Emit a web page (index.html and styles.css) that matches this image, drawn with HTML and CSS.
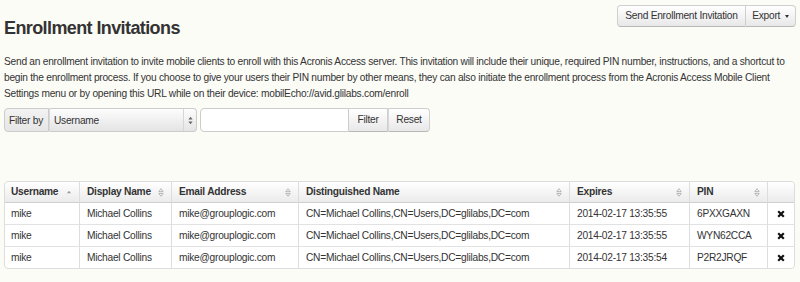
FILE: index.html
```html
<!DOCTYPE html>
<html>
<head>
<meta charset="utf-8">
<link rel="stylesheet" href="styles.css">
</head>
<body>
<div class="page">
  <div class="header">
    <h1 class="title">Enrollment Invitations</h1>
    <div class="btn-group">
      <button class="btn btn-send">Send Enrollment Invitation</button><button class="btn btn-export">Export <span class="caret"></span></button>
    </div>
  </div>
  <p class="intro">Send an enrollment invitation to invite mobile clients to enroll with this Acronis Access server. This invitation will include their unique, required PIN number, instructions, and a shortcut to begin the enrollment process. If you choose to give your users their PIN number by other means, they can also initiate the enrollment process from the Acronis Access Mobile Client Settings menu or by opening this URL while on their device: mobilEcho://avid.glilabs.com/enroll</p>
  <div class="filter">
    <div class="group">
      <span class="addon">Filter by</span>
      <div class="select"><span class="select-label">Username</span><span class="select-arrows"><svg width="5" height="9" viewBox="0 0 5 9"><path d="M2.5 0.8 L4.6 3.6 L0.4 3.6 Z M2.5 8.2 L4.6 5.4 L0.4 5.4 Z" fill="#666"/></svg></span></div>
    </div>
    <div class="group">
      <div class="text-input"></div>
      <button class="btn btn-join btn-filter">Filter</button><button class="btn btn-join btn-reset">Reset</button>
    </div>
  </div>
  <table class="grid">
    <colgroup>
      <col class="c-user"><col class="c-disp"><col class="c-mail"><col class="c-dn"><col class="c-exp"><col class="c-pin"><col class="c-del">
    </colgroup>
    <thead>
      <tr>
        <th><div class="th-in">Username<svg class="sort" width="6" height="9" viewBox="0 0 6 9"><path d="M3 2.8 L5 5.3 L1 5.3 Z" fill="#999"/></svg></div></th>
        <th><div class="th-in">Display Name<svg class="sort" width="6" height="9" viewBox="0 0 6 9"><path d="M3 0.7 L5.2 3.6 L0.8 3.6 Z M3 8.3 L5.2 5.4 L0.8 5.4 Z" fill="none" stroke="#aaa" stroke-width="0.8"/></svg></div></th>
        <th><div class="th-in">Email Address<svg class="sort" width="6" height="9" viewBox="0 0 6 9"><path d="M3 0.7 L5.2 3.6 L0.8 3.6 Z M3 8.3 L5.2 5.4 L0.8 5.4 Z" fill="none" stroke="#aaa" stroke-width="0.8"/></svg></div></th>
        <th><div class="th-in">Distinguished Name<svg class="sort" width="6" height="9" viewBox="0 0 6 9"><path d="M3 0.7 L5.2 3.6 L0.8 3.6 Z M3 8.3 L5.2 5.4 L0.8 5.4 Z" fill="none" stroke="#aaa" stroke-width="0.8"/></svg></div></th>
        <th><div class="th-in">Expires<svg class="sort" width="6" height="9" viewBox="0 0 6 9"><path d="M3 0.7 L5.2 3.6 L0.8 3.6 Z M3 8.3 L5.2 5.4 L0.8 5.4 Z" fill="none" stroke="#aaa" stroke-width="0.8"/></svg></div></th>
        <th><div class="th-in">PIN<svg class="sort" width="6" height="9" viewBox="0 0 6 9"><path d="M3 0.7 L5.2 3.6 L0.8 3.6 Z M3 8.3 L5.2 5.4 L0.8 5.4 Z" fill="none" stroke="#aaa" stroke-width="0.8"/></svg></div></th>
        <th></th>
      </tr>
    </thead>
    <tbody>
      <tr>
        <td>mike</td><td>Michael Collins</td><td>mike@grouplogic.com</td><td>CN=Michael Collins,CN=Users,DC=glilabs,DC=com</td><td>2014-02-17 13:35:55</td><td>6PXXGAXN</td>
        <td class="del"><svg width="8" height="8" viewBox="0 0 8 8"><path d="M1.2 1.2 L6.8 6.8 M6.8 1.2 L1.2 6.8" stroke="#111" stroke-width="2.2"/></svg></td>
      </tr>
      <tr>
        <td>mike</td><td>Michael Collins</td><td>mike@grouplogic.com</td><td>CN=Michael Collins,CN=Users,DC=glilabs,DC=com</td><td>2014-02-17 13:35:55</td><td>WYN62CCA</td>
        <td class="del"><svg width="8" height="8" viewBox="0 0 8 8"><path d="M1.2 1.2 L6.8 6.8 M6.8 1.2 L1.2 6.8" stroke="#111" stroke-width="2.2"/></svg></td>
      </tr>
      <tr>
        <td>mike</td><td>Michael Collins</td><td>mike@grouplogic.com</td><td>CN=Michael Collins,CN=Users,DC=glilabs,DC=com</td><td>2014-02-17 13:35:54</td><td>P2R2JRQF</td>
        <td class="del"><svg width="8" height="8" viewBox="0 0 8 8"><path d="M1.2 1.2 L6.8 6.8 M6.8 1.2 L1.2 6.8" stroke="#111" stroke-width="2.2"/></svg></td>
      </tr>
    </tbody>
  </table>
</div>
</body>
</html>
```
FILE: styles.css
```css
html, body {
  margin: 0;
  padding: 0;
  background: #fcfcf7;
}
body {
  font-family: "Liberation Sans", Arial, sans-serif;
  font-size: 10.2px;
  letter-spacing: -0.25px;
  color: #333;
}
.page {
  padding: 5px 4px 0 4px;
}
.header {
  display: flex;
  justify-content: space-between;
  align-items: flex-start;
}
.title {
  margin: 11px 0 0 0;
  font-size: 18px;
  line-height: 24px;
  letter-spacing: -0.6px;
  font-weight: bold;
  color: #333;
}
.btn-group {
  display: flex;
}
.btn {
  box-sizing: border-box;
  font-family: inherit;
  font-size: 10.2px;
  letter-spacing: -0.25px;
  color: #333;
  height: 22px;
  padding: 0;
  margin: 0;
  border: 1px solid #cfcfcf;
  border-bottom-color: #b8b8b8;
  background: linear-gradient(#ffffff, #e8e8e8);
  border-radius: 0;
  line-height: 20px;
  text-align: center;
}
.btn-send {
  width: 129px;
  border-radius: 4px 0 0 4px;
}
.btn-export {
  width: 50px;
  border-left: none;
  border-radius: 0 4px 4px 0;
}
.caret {
  display: inline-block;
  width: 0;
  height: 0;
  border-left: 2.5px solid transparent;
  border-right: 2.5px solid transparent;
  border-top: 3px solid #333;
  vertical-align: middle;
  margin-left: 2px;
}
.intro {
  margin: 14px 0 0 0;
  line-height: 16px;
}
.filter {
  display: flex;
  gap: 3px;
  margin-top: 6px;
}
.group {
  display: flex;
  height: 24px;
}
.addon {
  box-sizing: border-box;
  display: flex;
  align-items: center;
  white-space: nowrap;
  padding: 0 0 0 4px;
  width: 45px;
  border: 1px solid #ccc;
  border-radius: 4px 0 0 4px;
  background: linear-gradient(#f2f2f2, #e6e6e6);
}
.select {
  box-sizing: border-box;
  display: flex;
  align-items: center;
  width: 148px;
  border: 1px solid #ccc;
  border-left: 1px solid #d8d8d8;
  border-radius: 0 4px 4px 0;
  background: linear-gradient(#fdfdfd, #e4e4e4);
}
.select-label {
  flex: 1;
  padding-left: 4px;
}
.select-arrows {
  display: flex;
  align-items: center;
  justify-content: center;
  width: 12px;
  height: 100%;
  border-left: 1px solid #d6d6d6;
}
.text-input {
  box-sizing: border-box;
  width: 149px;
  border: 1px solid #ccc;
  border-radius: 4px 0 0 4px;
  background: #fff;
}
.btn-join {
  height: 24px;
  border-left: none;
  line-height: 22px;
}
.btn-filter {
  width: 39px;
}
.btn-reset {
  width: 42px;
  border-left: 1px solid #d6d6d6;
  border-radius: 0 4px 4px 0;
}
.grid {
  margin-top: 49px;
  width: 791px;
  table-layout: fixed;
  border-collapse: separate;
  border-spacing: 0;
  border: 1px solid #ddd;
  border-radius: 4px;
  background: #fff;
}
.c-user { width: 74px; }
.c-disp { width: 92px; }
.c-mail { width: 127px; }
.c-dn { width: 271px; }
.c-exp { width: 120px; }
.c-pin { width: 78px; }
.c-del { width: 27px; }
.grid th, .grid td {
  padding: 0 7px;
  text-align: left;
  border-left: 1px solid #ddd;
  white-space: nowrap;
  overflow: hidden;
}
.grid th:first-child, .grid td:first-child {
  border-left: none;
  padding-left: 6px;
}
.grid th {
  line-height: 20px;
  font-weight: bold;
  background: linear-gradient(#ffffff, #ebebeb);
  border-bottom: 1px solid #d0d0d0;
}
.grid thead th:first-child { border-top-left-radius: 4px; }
.grid thead th:last-child { border-top-right-radius: 4px; }
.grid td {
  line-height: 21px;
  border-top: 1px solid #e2e2e2;
}
.grid tbody tr:first-child td {
  border-top: none;
}
.th-in {
  display: flex;
  justify-content: space-between;
  align-items: center;
}
.sort {
  display: block;
}
.grid td.del {
  text-align: center;
  padding: 0;
}
.del svg {
  vertical-align: middle;
}
```
